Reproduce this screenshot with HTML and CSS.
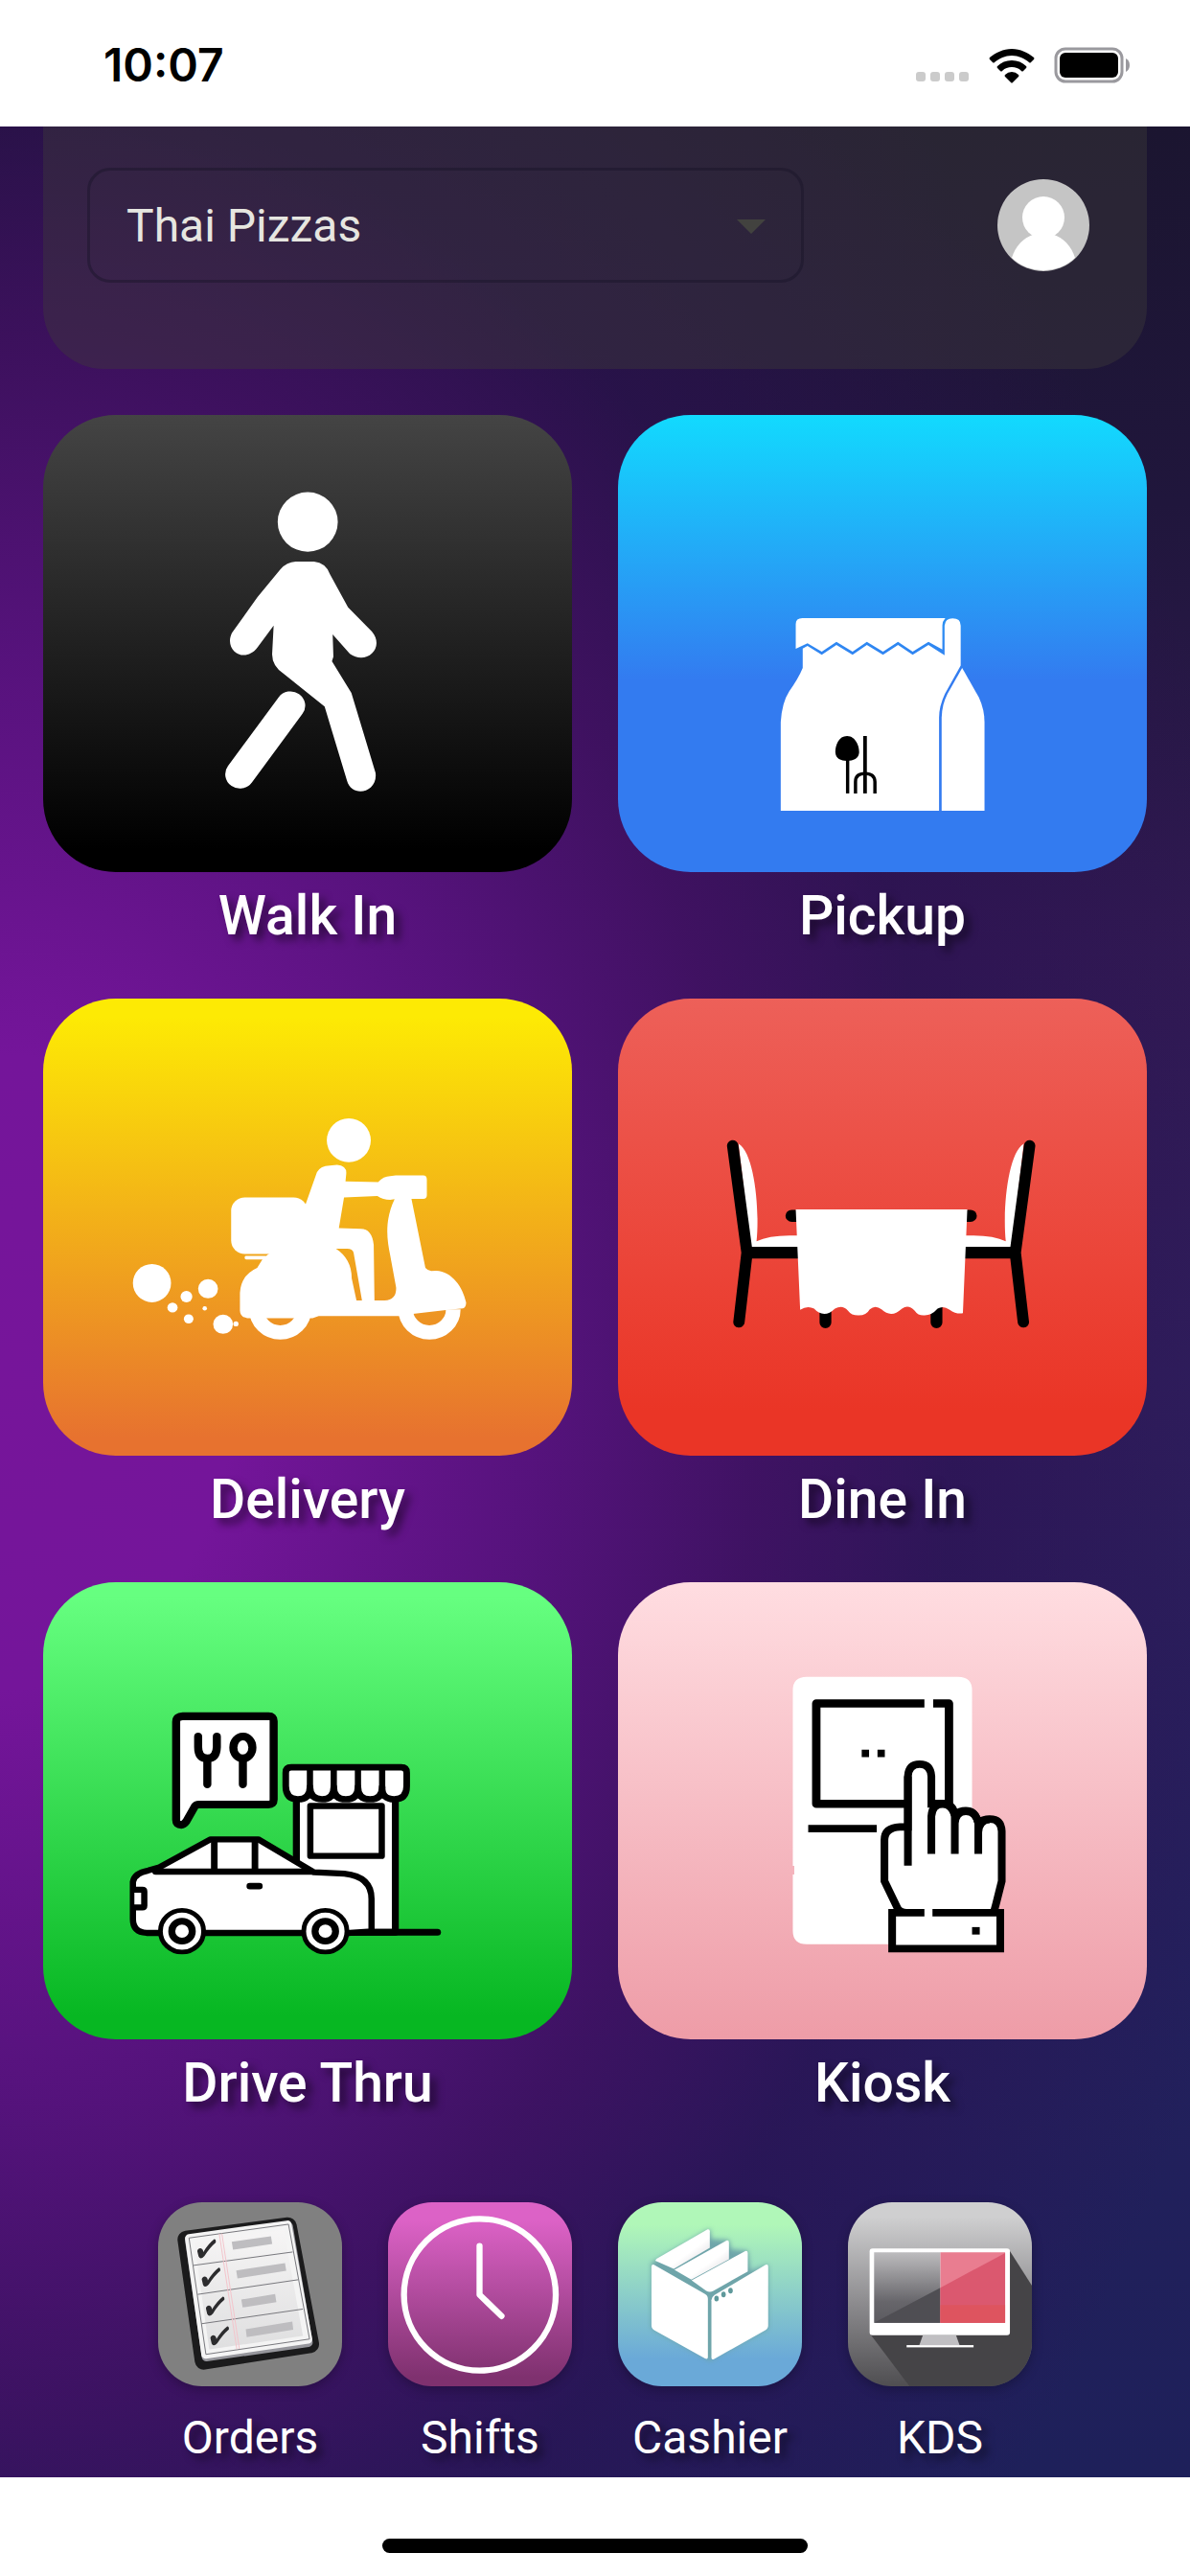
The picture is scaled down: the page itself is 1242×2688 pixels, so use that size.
FILE: index.html
```html
<!DOCTYPE html>
<html lang="en">
<head>
    <meta charset="UTF-8">
    <meta name="viewport" content="width=device-width, initial-scale=1.0">
    <title>Thai Pizzas - POS</title>
    <link rel="stylesheet" href="styles.css">
</head>
<body>
    <header class="status-bar">
        <span class="time">10:07</span>
        <div class="status-icons">
            <svg class="signal" viewBox="0 0 56 10" aria-hidden="true">
                <rect x="0" width="10" height="10" rx="3"/>
                <rect x="15" width="10" height="10" rx="3"/>
                <rect x="30" width="10" height="10" rx="3"/>
                <rect x="45" width="10" height="10" rx="3"/>
            </svg>
            <svg class="wifi" viewBox="0 0 48 36" aria-hidden="true">
                <path d="M24 0C33 0 41 4 47 9Q48 10 47 11L44 14Q43 15 42 14C37 10 31 7 24 7S11 10 6 14Q5 15 4 14L1 11Q0 10 1 9C7 4 15 0 24 0Z"/>
                <path d="M24 12C30 12 35 14 39 18Q40 19 39 20L36 23Q35 24 34 23C31 20 28 19 24 19S17 20 14 23Q13 24 12 23L9 20Q8 19 9 18C13 14 18 12 24 12Z"/>
                <path d="M24 24Q28 24 31 27Q32 28 31 29L25 35Q24 36 23 35L17 29Q16 28 17 27Q20 24 24 24Z"/>
            </svg>
            <svg class="battery" viewBox="0 0 80 38" aria-hidden="true">
                <rect x="2" y="2" width="69" height="34" rx="10" fill="none" stroke="#9a999e" stroke-width="3"/>
                <rect x="6" y="6" width="61" height="26" rx="6"/>
                <path d="M75 12Q79 14 79 19T75 26Z" fill="#9a999e"/>
            </svg>
        </div>
    </header>

    <main class="screen">
        <div class="top-panel">
            <div class="store-picker">
                <select class="store-select" aria-label="Store">
                    <option>Thai Pizzas</option>
                </select>
                <svg class="arrow" viewBox="0 0 30 15" aria-hidden="true"><path d="M0 0H30L15 15Z"/></svg>
            </div>
            <button class="avatar" type="button" aria-label="Account">
                <svg viewBox="0 0 96 96" aria-hidden="true">
                    <circle cx="48" cy="48" r="48" fill="#c5c5c5"/>
                    <circle cx="48" cy="40" r="22" fill="#fff"/>
                    <path d="M15 82C20 66 33 56 48 56S76 66 81 82A48 48 0 0 1 15 82Z" fill="#fff"/>
                </svg>
            </button>
        </div>

        <nav class="tiles">
            <a class="tile" href="#walk-in">
                <div class="tile-art walk-in">
                    <svg viewBox="13 8 1443 1290" preserveAspectRatio="none" fill="#fff" aria-hidden="true">
                        <ellipse cx="735" cy="310" rx="82" ry="84"/>
                        <path d="M702 422H752Q784 425 796 458L845 551L910 619C947 665 895 715 850 682L803 627L805 690L801 703L854 792L920 1018C927 1075 855 1090 842 1040L781 831L670 739Q636 715 638 680L642 602L598 664C563 712 505 672 528 623L598 522L660 444Q678 423 702 422Z"/>
                        <path d="M688 828L550 1022" stroke="#fff" stroke-width="80" stroke-linecap="round"/>
                    </svg>
                </div>
                <span class="tile-label">Walk In</span>
            </a>

            <a class="tile" href="#pickup">
                <div class="tile-art pickup">
                    <svg viewBox="13 8 1443 1290" preserveAspectRatio="none" fill="#fff" aria-hidden="true">
                        <path d="M498 668V598Q498 581 516 581H906Q898 590 898 602V670L860 648L817 676L777 648L736 676L692 648L653 676L609 648L569 676L530 652Z"/>
                        <path d="M517 667L530 660L569 685L609 657L653 685L692 657L736 685L777 657L817 685L860 657L904 686V602Q906 582 926 582Q948 582 948 602V715L905 795Q889 830 889 862V1125H457V875Q460 820 480 788Q505 752 517 722Z"/>
                        <path d="M952 722L998 806Q1013 840 1013 875V1125H896V862Q897 825 912 795Z"/>
                        <g fill="#000">
                            <path d="M638 914C662 914 672 945 671 960C670 978 655 984 638 984S607 978 606 960C606 940 615 914 638 914Z"/>
                            <rect x="635" y="980" width="9" height="96"/>
                            <rect x="682" y="914" width="10" height="162"/>
                        </g>
                        <path d="M661 1076V1043Q661 1020 687 1020T714 1043V1076" fill="none" stroke="#000" stroke-width="9"/>
                    </svg>
                </div>
                <span class="tile-label">Pickup</span>
            </a>

            <a class="tile" href="#delivery">
                <div class="tile-art delivery">
                    <svg viewBox="13 5 1443 1290" preserveAspectRatio="none" fill="#fff" aria-hidden="true">
                        <ellipse cx="847" cy="405" rx="60" ry="62"/>
                        <rect x="526" y="566" width="208" height="160" rx="38"/>
                        <rect x="563" y="731" width="60" height="10" rx="4"/>
                        <circle cx="660" cy="882" r="65" fill="none" stroke="#fff" stroke-width="40"/>
                        <path d="M1002 882A65 65 0 0 0 1132 882" fill="none" stroke="#fff" stroke-width="40"/>
                        <path fill-rule="evenodd" d="M760 495Q770 476 795 476L815 474Q842 476 840 500L838 521L927 523Q942 506 960 506L975 504H1050Q1060 504 1060 516V560Q1060 570 1050 570H1018L1056 765Q1064 774 1072 774L1085 773C1130 775 1158 820 1167 862Q1168 880 1152 880L1112 884L1022 895L983 901H765L748 907H570Q550 903 550 885V835Q553 785 597 765L612 740L628 726L690 700L730 583Z
                            M834 566L925 562Q940 573 960 573L972 571C945 630 950 680 960 730L976 820Q978 855 945 857H917L915 700Q910 655 880 655L820 653Z
                            M812 711H840Q857 710 860 722L883 857H868L855 795Q855 740 812 711Z"/>
                        <ellipse cx="310" cy="808" rx="52" ry="54"/>
                        <circle cx="463" cy="824" r="27"/>
                        <circle cx="404" cy="846" r="16"/>
                        <circle cx="366" cy="877" r="14"/>
                        <circle cx="454" cy="879" r="6"/>
                        <circle cx="410" cy="909" r="13"/>
                        <circle cx="504" cy="924" r="27"/>
                        <circle cx="539" cy="923" r="7"/>
                    </svg>
                </div>
                <span class="tile-label">Delivery</span>
            </a>

            <a class="tile" href="#dine-in">
                <div class="tile-art dine-in">
                    <svg viewBox="13 5 1443 1290" preserveAspectRatio="none" aria-hidden="true">
                        <defs>
                            <g id="chair">
                                <path d="M342 415C385 440 400 600 391 690Q430 670 505 674V710H375Z" fill="#fff"/>
                                <path d="M326 420L365 722L343 918" fill="none" stroke="#000" stroke-width="31" stroke-linecap="round" stroke-linejoin="round"/>
                                <path d="M365 722H510" stroke="#000" stroke-width="33"/>
                            </g>
                        </defs>
                        <use href="#chair"/>
                        <use href="#chair" transform="translate(1462 0) scale(-1 1)"/>
                        <path d="M487 618H975" stroke="#000" stroke-width="34" stroke-linecap="round"/>
                        <path d="M579 860V919M882 860V919" stroke="#000" stroke-width="32" stroke-linecap="round"/>
                        <path d="M498 600H966L954 893Q935 896 918 883Q900 870 885 880Q868 900 848 899Q832 900 822 885Q805 867 788 880Q770 896 758 895Q745 894 732 882Q715 868 700 882Q690 900 668 899Q650 899 640 885Q625 868 605 880Q590 895 576 895Q560 894 548 880Q530 870 510 883Z" fill="#fff"/>
                    </svg>
                </div>
                <span class="tile-label">Dine In</span>
            </a>

            <a class="tile" href="#drive-thru">
                <div class="tile-art drive-thru">
                    <svg viewBox="13 30 1443 1289" preserveAspectRatio="none" fill="#fff" stroke="#000" stroke-width="19" stroke-linecap="round" stroke-linejoin="round" aria-hidden="true">
                        <!-- store -->
                        <rect x="704" y="630" width="270" height="387"/>
                        <path d="M850 1017H1089"/>
                        <rect x="742" y="661" width="195" height="141" stroke-width="17"/>
                        <path d="M675 567Q675 552 690 552H990Q1005 552 1005 567V605Q1005 642 971 642T938 608Q938 642 905 642T872 608Q872 642 839 642T806 608Q806 642 774 642T741 608Q741 642 708 642T675 605Z" stroke-width="18"/>
                        <path d="M741 552V610M806 552V610M872 552V610M938 552V610" stroke-width="17"/>
                        <!-- speech bubble -->
                        <path d="M394 408H628Q642 408 642 422V643Q642 657 628 657H438Q430 657 427 662L404 704Q397 714 390 714Q376 714 376 700V424Q376 408 394 408Z" stroke-width="22"/>
                        <path d="M436 465V495Q436 527 461 527T487 495V465M461 527V600M558 530V600" fill="none" stroke-width="22"/>
                        <ellipse cx="558" cy="496" rx="26" ry="31" stroke-width="22"/>
                        <!-- car -->
                        <path d="M330 834L470 755H600L752 848L835 852Q910 860 909 925V1015L850 1019H295Q258 1017 258 980V875Q262 850 300 843Z" stroke-width="17"/>
                        <path d="M320 846H745M480 760V846M591 760V846M577 887H603" stroke-width="18"/>
                        <path d="M262 897H284Q289 897 289 902V942Q289 947 284 947H262" stroke-width="17"/>
                        <circle cx="392" cy="1014" r="59" stroke-width="13"/>
                        <circle cx="392" cy="1014" r="28"/>
                        <circle cx="783" cy="1014" r="59" stroke-width="13"/>
                        <circle cx="783" cy="1014" r="28"/>
                    </svg>
                </div>
                <span class="tile-label">Drive Thru</span>
            </a>

            <a class="tile" href="#kiosk">
                <div class="tile-art kiosk">
                    <svg viewBox="13 30 1443 1289" preserveAspectRatio="none" fill="#fff" stroke="#000" stroke-width="21" aria-hidden="true">
                        <path d="M528 297H941Q979 297 979 335V1051H528Q490 1051 490 1013V854H494V830H490V335Q490 297 528 297Z" stroke="none"/>
                        <path d="M849 372H554V655H916V372H873" stroke-width="23" stroke-linejoin="round"/>
                        <path d="M532 725H719M678 513H698M721 513H741"/>
                        <!-- hand -->
                        <path d="M804 720H782Q740 722 740 757V873L776 950Q784 962 800 962H1038L1045 935L1060 873V732Q1058 698 1028 698Q1008 698 996 708Q988 674 962 674Q945 674 932 686Q922 655 898 655H868V577Q866 543 836 543T804 577Z"/>
                        <path d="M804 829V577M868 796V690Q870 655 900 655T932 690V796M932 710Q934 676 962 676T996 710V796M996 735Q998 699 1028 699" fill="none"/>
                        <path d="M761 962H1056V1063H761Z"/>
                        <path d="M860 950V974" stroke="#fff" stroke-width="22"/>
                        <path d="M979 1013H1000"/>
                    </svg>
                </div>
                <span class="tile-label">Kiosk</span>
            </a>
        </nav>

        <nav class="dock">
            <a class="app" href="#orders">
                <svg class="app-icon orders" viewBox="75 85 577 577" aria-hidden="true">
                    <defs>
                        <linearGradient id="paper" x1="0" y1="0" x2="0" y2="1"><stop stop-color="#f7f6f6"/><stop offset="1" stop-color="#dededf"/></linearGradient>
                        <path id="check" d="M198 238Q199 230 208 229Q216 231 217 241Q232 216 251 201Q257 201 256 211Q237 227 220 254Q208 267 202 255Z" fill="#2c2c2e"/>
                    </defs>
                    <path d="M164 202L482 160L552 530L218 582Z" fill="#1b1b1c" stroke="#1b1b1c" stroke-width="56" stroke-linejoin="round"/>
                    <path d="M173 202L484 161L546 525L226 570Z" fill="#96969c" stroke="#96969c" stroke-width="28" stroke-linejoin="round"/>
                    <path d="M173 198L480 156L545 515L224 562Z" fill="url(#paper)" stroke="#f4f4f4" stroke-width="27" stroke-linejoin="round"/>
                    <path d="M172 197L484 154L550 514L225 562ZM186 283L497 241M199 374L514 328M211 466L529 420" fill="none" stroke="#77777c" stroke-width="3" stroke-linejoin="round"/>
                    <path d="M267 184L322 546M275 183L330 545" stroke="#f3c4cb" stroke-width="3"/>
                    <path d="M306 209L429 192L433 216L310 234ZM320 299L473 276L477 300L324 324ZM336 390L442 373L446 398L340 415ZM350 483L496 459L499 485L353 508Z" fill="#bebdc0"/>
                    <use href="#check"/>
                    <use href="#check" x="14" y="89"/>
                    <use href="#check" x="27" y="180"/>
                    <use href="#check" x="41" y="273"/>
                </svg>
                <span class="app-label">Orders</span>
            </a>
            <a class="app" href="#shifts">
                <svg class="app-icon shifts" viewBox="794 85 577 577" fill="none" stroke="#fff" stroke-width="19" stroke-linecap="round" stroke-linejoin="round" aria-hidden="true">
                    <circle cx="1082" cy="375" r="238"/>
                    <path d="M1081 222V375L1150 442"/>
                </svg>
                <span class="app-label">Shifts</span>
            </a>
            <a class="app" href="#cashier">
                <svg class="app-icon cashier" viewBox="75 85 577 577" fill="#fff" aria-hidden="true">
                    <defs>
                        <linearGradient id="fold" x1="0" y1="0" x2="1" y2="1"><stop offset=".6" stop-color="#fff"/><stop offset="1" stop-color="#cfcdd2"/></linearGradient>
                    </defs>
                    <path class="box-shadow" d="M180 275L363 168L368 200L423 204L430 232L482 237L490 300L546 280V482L363 582L180 482Z" fill="#6fa5aa"/>
                    <path d="M192 268L196 262L356 170Q363 168 363 176V228L250 294Z" fill="url(#fold)"/>
                    <path d="M252 297L415 205Q423 203 423 211V264L305 328Z" fill="url(#fold)"/>
                    <path d="M306 330L474 238Q482 236 482 244V302L374 363Q363 369 352 363Z"/>
                    <path d="M188 281L348 373Q357 378 357 388V570Q357 579 348 575L190 487Q180 481 180 472V286Q181 278 188 281Z"/>
                    <path d="M378 376L538 281Q546 278 546 286V472Q546 481 536 487L377 576Q368 581 368 572V392Q369 382 378 376Z"/>
                    <g fill="#5f999b">
                        <ellipse cx="384" cy="387" rx="7" ry="9"/>
                        <ellipse cx="406" cy="374" rx="7" ry="9"/>
                        <ellipse cx="428" cy="362" rx="7" ry="9"/>
                    </g>
                </svg>
                <span class="app-label">Cashier</span>
            </a>
            <a class="app" href="#kds">
                <svg class="app-icon kds" viewBox="794 82 577 577" aria-hidden="true">
                    <defs>
                        <linearGradient id="screen-left" x1="0" y1="0" x2="0" y2="1"><stop stop-color="#bdbcbe"/><stop offset=".7" stop-color="#67666b"/><stop offset="1" stop-color="#5c5b60"/></linearGradient>
                    </defs>
                    <path d="M1302 235L1372 345V660H988L866 498Z" fill="#454447"/>
                    <rect x="862" y="227" width="440" height="272" rx="9" fill="#fff"/>
                    <rect x="876" y="239" width="208" height="221" fill="url(#screen-left)"/>
                    <path d="M876 460L1084 350V460Z" fill="#4f4e53"/>
                    <rect x="1084" y="239" width="203" height="221" fill="#e97d90"/>
                    <path d="M1084 350L1287 241V460H1084Z" fill="#db586f"/>
                    <path d="M1084 404H1287V460H1084Z" fill="#de545f"/>
                    <path d="M1029 499H1133L1144 530H1018Z" fill="#c0bfc2"/>
                    <rect x="978" y="530" width="210" height="7" fill="#fff"/>
                </svg>
                <span class="app-label">KDS</span>
            </a>
        </nav>
    </main>

    <footer class="home-area">
        <div class="home-indicator"></div>
    </footer>
</body>
</html>
```
FILE: styles.css
```css
* {
    margin: 0;
    padding: 0;
    box-sizing: border-box;
}

body {
    min-height: 100vh;
    display: flex;
    flex-direction: column;
    background: #fff;
    font-family: Roboto, sans-serif;
    color: #fff;
}

a {
    color: inherit;
    text-decoration: none;
}

/* status bar */
.status-bar {
    height: 132px;
    padding: 4px 62px 0 108px;
    display: flex;
    align-items: center;
    justify-content: space-between;
    color: #000;
}

.time {
    font-family: Inter, sans-serif;
    font-size: 48px;
    font-weight: 600;
    line-height: 56px;
}

.status-icons {
    display: flex;
    align-items: flex-end;
    gap: 20px;
}

.signal {
    width: 56px;
    height: 12px;
    padding-bottom: 2px;
    fill: #cbcbcb;
}

.wifi {
    width: 48px;
    height: 36px;
}

.battery {
    width: 80px;
    height: 38px;
}

/* screen */
.screen {
    flex: 1;
    padding: 0 45px;
    background:
        radial-gradient(ellipse 110% 75% at 0% 53%, #76159a 0%, #74159a 18%, rgba(88, 18, 126, 0.95) 41%, rgba(66, 16, 100, 0.85) 58%, rgba(46, 16, 84, 0.6) 73%, rgba(40, 16, 76, 0) 100%),
        linear-gradient(#1b1530, #20163c 16%, #301a52 35%, #2e1f5c 53%, #23205c 78%, #1e205a);
}

.top-panel {
    display: flex;
    align-items: center;
    justify-content: space-between;
    padding: 43px 60px 90px 46px;
    border-radius: 0 0 64px 64px;
    background: rgba(62, 60, 58, 0.42);
}

.store-picker {
    position: relative;
    width: 72%;
    max-width: 748px;
}

.store-select {
    appearance: none;
    width: 100%;
    height: 120px;
    padding: 0 96px 0 38px;
    border: 3px solid rgba(24, 20, 40, 0.45);
    border-radius: 24px;
    background: transparent;
    color: #e6e6e0;
    font-family: inherit;
    font-size: 48px;
}

.arrow {
    position: absolute;
    top: 54px;
    right: 40px;
    width: 30px;
    height: 15px;
    fill: #42423f;
    pointer-events: none;
}

.avatar {
    width: 96px;
    height: 96px;
    border: none;
    border-radius: 50%;
    background: none;
    cursor: pointer;
}

.avatar svg {
    display: block;
}

/* main tiles */
.tiles {
    display: grid;
    grid-template-columns: 1fr 1fr;
    gap: 54px 48px;
    margin-top: 48px;
}

.tile {
    display: flex;
    flex-direction: column;
    gap: 14px;
    text-align: center;
}

.tile-art {
    aspect-ratio: 552 / 477;
    border-radius: 76px;
    overflow: hidden;
}

.tile-art svg {
    display: block;
    width: 100%;
    height: 100%;
}

.tile-label {
    font-size: 57px;
    font-weight: 500;
    line-height: 64px;
    text-shadow: 6px 6px 8px rgba(0, 0, 0, 0.5);
}

.walk-in {
    background: linear-gradient(#444, #000 95%);
}

.pickup {
    background: linear-gradient(#12dafe, #337bf0 58%);
}

.delivery {
    background: linear-gradient(#fdea04 4%, #e7722f 96%);
}

.dine-in {
    background: linear-gradient(#ed6059, #ea3526 90%);
}

.drive-thru {
    background: linear-gradient(#66ff80 3%, #07b722 95%);
}

.kiosk {
    background: linear-gradient(#ffdde1, #ee9ca7);
}

/* small apps */
.dock {
    display: flex;
    justify-content: center;
    gap: 48px;
    margin-top: 92px;
    padding-bottom: 13px;
}

.app {
    width: 192px;
    display: flex;
    flex-direction: column;
    gap: 26px;
    text-align: center;
}

.app-icon {
    display: block;
    width: 192px;
    height: 192px;
    border-radius: 46px;
    box-shadow: 0 4px 12px rgba(0, 0, 0, 0.25);
}

.app-label {
    font-size: 48px;
    line-height: 56px;
    text-shadow: 6px 6px 8px rgba(0, 0, 0, 0.5);
}

.orders {
    background: #808080;
}

.shifts {
    background: linear-gradient(#dc62c6 10%, #7f316f 95%);
}

.cashier {
    background: linear-gradient(#b0f7b8 12%, #6aa9d8 85%);
}

.box-shadow {
    filter: blur(8px);
}

.kds {
    background: linear-gradient(#cfcfd0 8%, #8c8b8e 55%, #4f4e51);
}

/* home indicator */
.home-area {
    height: 103px;
    padding-top: 64px;
}

.home-indicator {
    width: 444px;
    height: 15px;
    margin: 0 auto;
    border-radius: 8px;
    background: #000;
}
```
